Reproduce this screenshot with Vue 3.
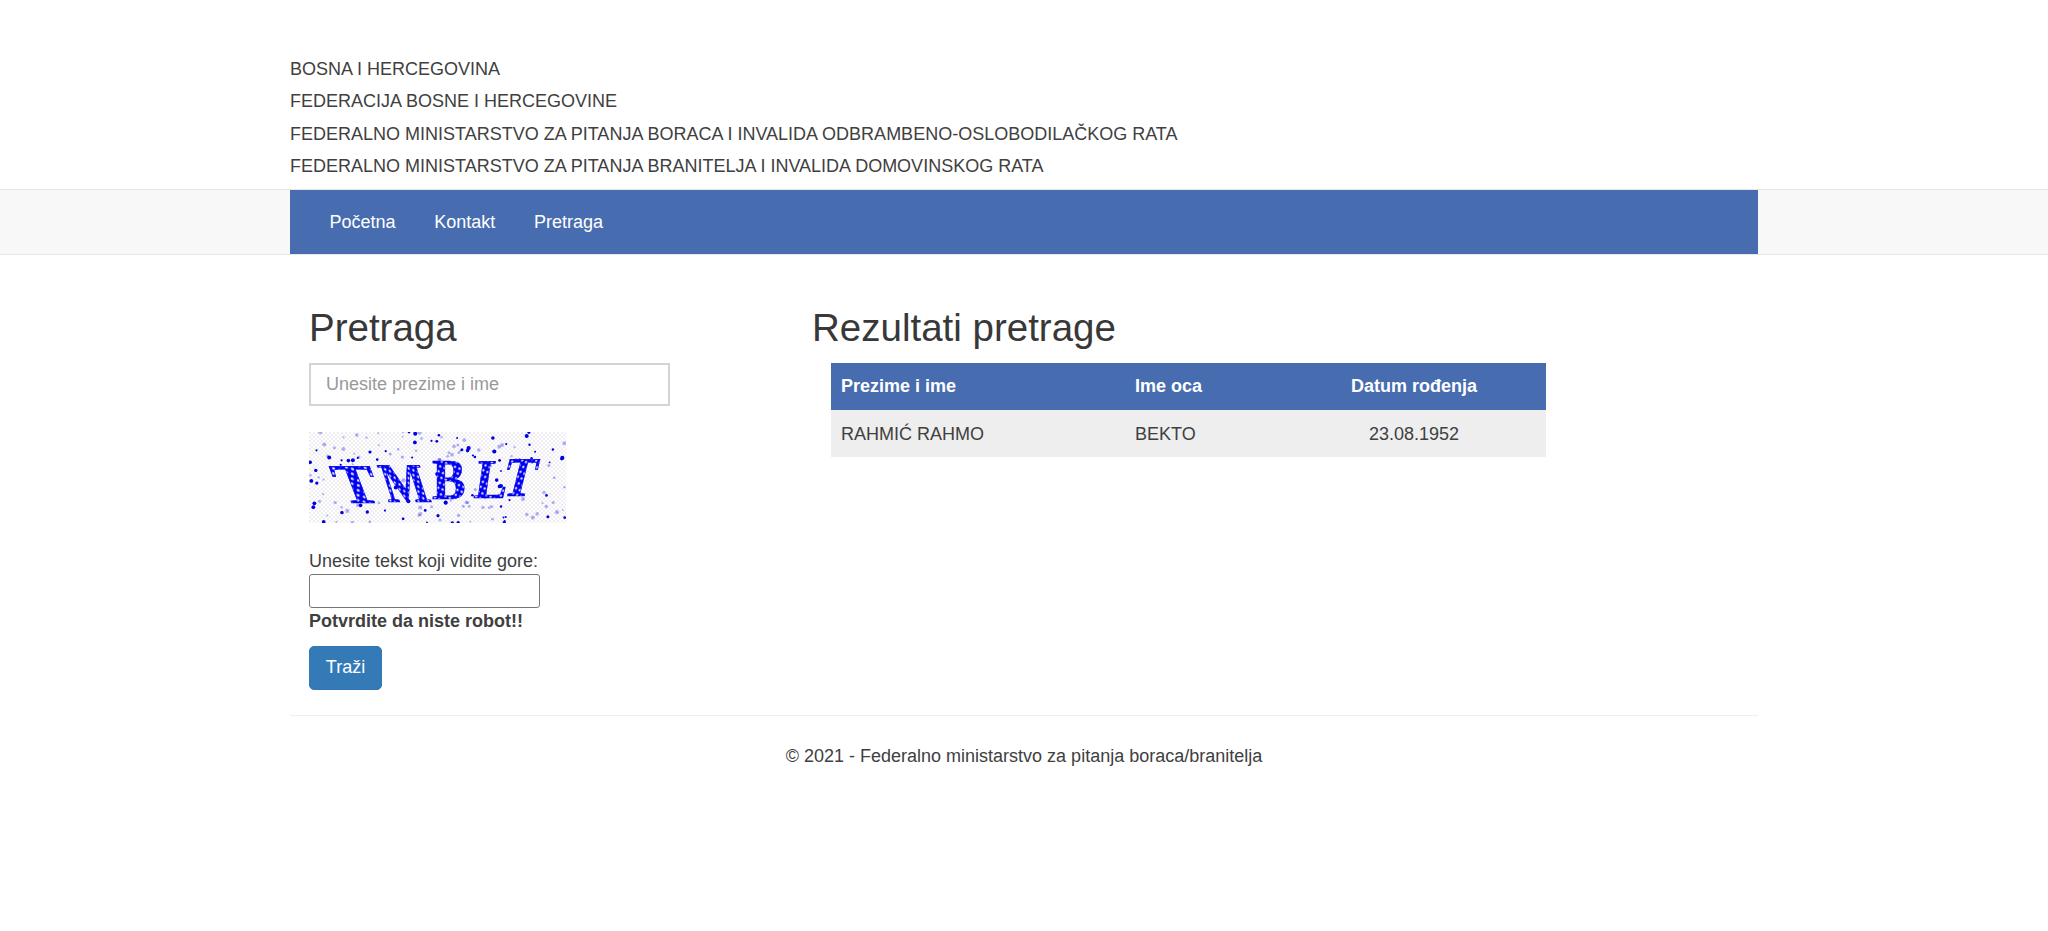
<script setup>
const lines = [
  'BOSNA I HERCEGOVINA',
  'FEDERACIJA BOSNE I HERCEGOVINE',
  'FEDERALNO MINISTARSTVO ZA PITANJA BORACA I INVALIDA ODBRAMBENO-OSLOBODILAČKOG RATA',
  'FEDERALNO MINISTARSTVO ZA PITANJA BRANITELJA I INVALIDA DOMOVINSKOG RATA',
]
const links = ['Početna', 'Kontakt', 'Pretraga']

let seed = 7321
const rnd = () => {
  seed = (seed * 16807) % 2147483647
  return seed / 2147483647
}
const noise = []
for (let i = 0; i < 230; i++) {
  const x = rnd() * 257
  const y = rnd() * 91
  if (y > 30 && y < 68 && x > 16 && x < 235 && rnd() > 0.2) continue
  noise.push({
    x: x.toFixed(1),
    y: y.toFixed(1),
    r: (0.9 + rnd() * 1.2).toFixed(1),
    o: rnd() > 0.5 ? 1 : 0.3,
  })
}
const letters = [
  { ch: 'T', t: 'translate(33 71) skewX(21) scale(1.14 1)' },
  { ch: 'M', t: 'translate(79 70) skewX(18) scale(0.85 1)' },
  { ch: 'B', t: 'translate(123 67) scale(0.9 1)' },
  { ch: 'L', t: 'translate(164 66) skewX(-8) scale(0.88 1)' },
  { ch: 'T', t: 'translate(191 64) skewX(-14) scale(0.85 1)' },
]
</script>

<template>
  <div class="page">
    <header class="wrap heading">
      <p v-for="l in lines" :key="l">{{ l }}</p>
    </header>
    <nav class="navbar">
      <div class="wrap navinner">
        <a v-for="l in links" :key="l" class="navlink">{{ l }}</a>
      </div>
    </nav>
    <main class="wrap">
      <div class="columns">
        <section class="left">
          <h2>Pretraga</h2>
          <input class="search" type="text" placeholder="Unesite prezime i ime" />
          <svg class="captcha" width="257" height="91" viewBox="0 0 257 91" role="img" aria-label="captcha">
            <defs>
              <pattern id="bgdots" width="4" height="4" patternUnits="userSpaceOnUse">
                <circle cx="1" cy="1" r="0.7" fill="#cfcfd6" />
                <circle cx="3" cy="3" r="0.7" fill="#d9d2e0" />
              </pattern>
              <pattern id="ink" width="5.2" height="5.2" patternUnits="userSpaceOnUse" patternTransform="rotate(20)">
                <rect width="5.2" height="5.2" fill="#0000f0" />
                <circle cx="2.6" cy="2.6" r="1.3" fill="#e6e6ff" />
              </pattern>
            </defs>
            <rect width="257" height="91" fill="url(#bgdots)" />
            <circle v-for="(n, i) in noise" :key="i" :cx="n.x" :cy="n.y" :r="n.r" :opacity="n.o" fill="#0000e6" />
            <text v-for="(l, i) in letters" :key="i" class="capletter" :transform="l.t" fill="url(#ink)" stroke="#0000f0" stroke-width="0.6">{{ l.ch }}</text>
          </svg>
          <label class="caplabel" for="cap">Unesite tekst koji vidite gore:</label>
          <input id="cap" class="capinput" type="text" />
          <strong class="warn">Potvrdite da niste robot!!</strong>
          <button class="btn" type="button">Traži</button>
        </section>
        <section class="right">
          <h2>Rezultati pretrage</h2>
          <table>
            <thead>
              <tr>
                <th class="c1">Prezime i ime</th>
                <th class="c2">Ime oca</th>
                <th class="c3">Datum rođenja</th>
              </tr>
            </thead>
            <tbody>
              <tr>
                <td class="c1">RAHMIĆ RAHMO</td>
                <td class="c2">BEKTO</td>
                <td class="c3">23.08.1952</td>
              </tr>
            </tbody>
          </table>
        </section>
      </div>
      <hr />
      <footer>© 2021 - Federalno ministarstvo za pitanja boraca/branitelja</footer>
    </main>
  </div>
</template>

<style scoped>
.page {
  font-family: "Liberation Sans", Arial, sans-serif;
  font-size: 18px;
  line-height: 1.39;
  color: #404040;
  background: #fff;
  min-height: 931px;
}
.wrap {
  width: 1468px;
  margin-left: 290px;
}
.heading {
  padding-top: 53px;
  height: 189px;
  box-sizing: border-box;
}
.heading p {
  margin: 0;
  height: 32.4px;
  line-height: 32.4px;
}
.navbar {
  background: #f8f8f8;
  border-top: 1px solid #e7e7e7;
  border-bottom: 1px solid #e7e7e7;
  height: 66px;
  box-sizing: border-box;
}
.navinner {
  background: #476db0;
  height: 100%;
  display: flex;
  align-items: center;
  padding-top: 2px;
  padding-left: 20px;
  box-sizing: border-box;
}
.navlink {
  color: #fff;
  padding: 0 19.4px;
}
.columns {
  display: flex;
  height: 460px;
}
.left {
  width: 503px;
  box-sizing: border-box;
  padding-left: 19px;
  display: flex;
  flex-direction: column;
  align-items: flex-start;
}
.right {
  flex: 1;
  padding-left: 19px;
}
h2 {
  margin: 0;
  padding-top: 49px;
  height: 108px;
  box-sizing: border-box;
  font-size: 38.5px;
  font-weight: 500;
  line-height: 48px;
  color: #383838;
}
.search {
  width: 361px;
  height: 43px;
  box-sizing: border-box;
  border: 2px solid #d4d4d4;
  padding: 0 15px;
  font: inherit;
  color: #555;
  outline: none;
}
.search::placeholder {
  color: #999;
  opacity: 1;
}
.captcha {
  display: block;
  margin-top: 26px;
}
.capletter {
  font-family: "Liberation Serif", serif;
  font-weight: 700;
  font-size: 56px;
}
.caplabel {
  margin-top: 26px;
  line-height: 25px;
}
.capinput {
  width: 231px;
  height: 34px;
  box-sizing: border-box;
  border: 1px solid #767676;
  border-radius: 3px;
  padding: 0 2px;
  font: inherit;
  outline: none;
}
.warn {
  line-height: 25px;
  margin-top: 1px;
  margin-bottom: 12px;
}
.btn {
  width: 73px;
  height: 44px;
  background: #337ab7;
  border: 1px solid #3079b6;
  border-radius: 5px;
  color: #fff;
  font: inherit;
  padding: 0;
}
table {
  width: 715px;
  margin-left: 19px;
  border-collapse: collapse;
  table-layout: fixed;
}
th, td {
  height: 47px;
  padding: 0 10px;
  text-align: left;
  box-sizing: border-box;
}
th {
  background: #476db0;
  color: #fff;
  font-weight: 700;
}
td {
  background: #eee;
  padding-top: 2px;
}
.c1 { width: 294px; }
.c2 { width: 157px; }
.c3 { text-align: center; }
hr {
  margin: 0;
  border: 0;
  border-top: 1px solid #eee;
}
footer {
  text-align: center;
  padding-top: 28px;
}
</style>
